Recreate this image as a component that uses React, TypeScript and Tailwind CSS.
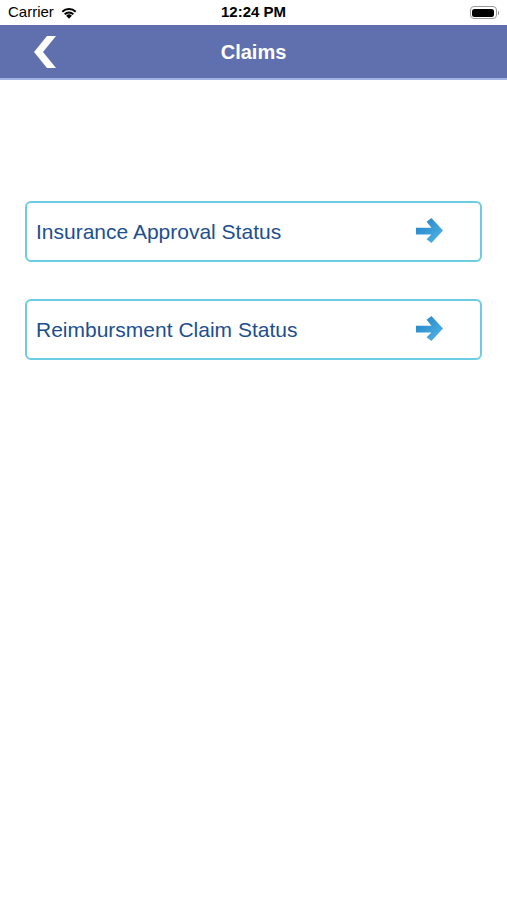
import React from "react";

function Arrow() {
  return (
    <svg width="29" height="27" viewBox="0 0 30 28">
      <defs>
        <linearGradient id="ag" x1="0" y1="0" x2="1" y2="1">
          <stop offset="0" stopColor="#1f7fc4" />
          <stop offset="1" stopColor="#55b8e8" />
        </linearGradient>
      </defs>
      <path d="M1 10 H17 L12 4 L17 0 L29 13 L17 26 L12 22 L17 17 H1 Z" fill="url(#ag)" />
    </svg>
  );
}

function Row({ label }: { label: string }) {
  return (
    <div className="h-[61px] rounded-[6px] border-2 border-[#6ccde2] flex items-center pl-[9px] pr-[36px]">
      <span className="flex-1 text-[21px] text-[#1d4f8f]" style={{ fontFamily: '"Liberation Sans", Arial, sans-serif' }}>{label}</span>
      <Arrow />
    </div>
  );
}

export default function App() {
  return (
    <div className="w-[507px] h-[900px] bg-white" style={{ fontFamily: '"Liberation Sans", Arial, sans-serif' }}>
      <div className="h-[25px] flex items-center px-[8px] relative">
        <div className="flex items-center gap-[6px] text-[15px] text-black">
          <span>Carrier</span>
          <svg width="18" height="13" viewBox="0 0 17 12">
            <path d="M8.5 12 L5.8 9 A4 4 0 0 1 11.2 9 Z" fill="#000" />
            <path d="M3.8 7 A6.8 6.8 0 0 1 13.2 7 L12 8.3 A5 5 0 0 0 5 8.3 Z" fill="#000" />
            <path d="M1.5 4.5 A10 10 0 0 1 15.5 4.5 L14.2 5.9 A8.2 8.2 0 0 0 2.8 5.9 Z" fill="#000" />
          </svg>
        </div>
        <div className="absolute left-0 right-0 text-center text-[15px] font-bold text-black">12:24 PM</div>
        <div className="ml-auto flex items-center">
          <div className="w-[27px] h-[13px] rounded-[4px] border border-[#999] p-[1.5px]">
            <div className="w-full h-full rounded-[2.5px] bg-black" />
          </div>
          <div className="w-[1.5px] h-[4px] bg-[#999] rounded-r ml-[1px]" />
        </div>
      </div>
      <div className="h-[55px] bg-[#6070ae] flex items-center relative border-b-2 border-[#9fb4e0]">
        <svg className="absolute left-[33px] top-[11px]" width="24" height="32" viewBox="0 0 24 32">
          <path d="M14 0 L23 0 L10 16 L23 32 L14 32 L1 16 Z" fill="#fff" />
        </svg>
        <div className="w-full text-center text-white text-[20px] font-bold">Claims</div>
      </div>
      <div className="px-[25px] pt-[121px] flex flex-col gap-[37px]">
        <Row label="Insurance Approval Status" />
        <Row label="Reimbursment Claim Status" />
      </div>
    </div>
  );
}
